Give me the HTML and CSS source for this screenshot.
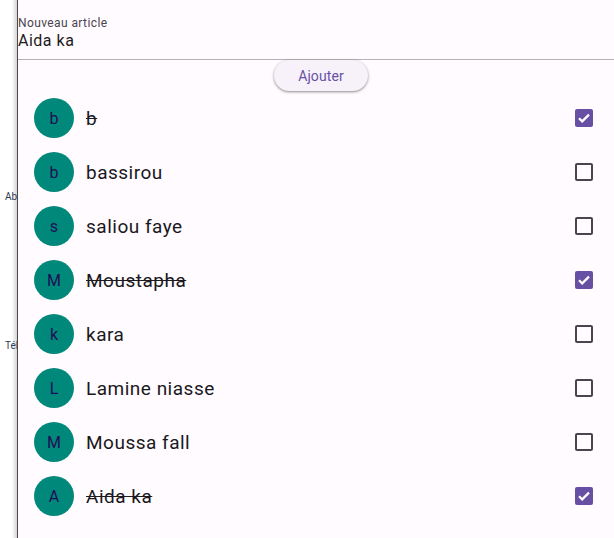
FILE: index.html
```html
<!DOCTYPE html>
<html lang="fr">
<head>
<meta charset="utf-8">
<link rel="stylesheet" href="styles.css">
</head>
<body>
<div class="prev">
  <span class="prev-label prev-ab">Ab</span>
  <span class="prev-label prev-te">Tél</span>
</div>
<main class="main">
  <div class="field">
    <div class="field-label">Nouveau article</div>
    <div class="field-input">Aida ka</div>
  </div>
  <div class="btn-row"><button class="btn">Ajouter</button></div>
  <ul class="list">
    <li class="row done"><span class="avatar">b</span><span class="title">b</span><span class="cb on"><svg viewBox="0 0 18 18"><path d="M4 9.3l3.2 3.1 6.8-6.8"/></svg></span></li>
    <li class="row"><span class="avatar">b</span><span class="title">bassirou</span><span class="cb"></span></li>
    <li class="row"><span class="avatar">s</span><span class="title">saliou faye</span><span class="cb"></span></li>
    <li class="row done"><span class="avatar">M</span><span class="title">Moustapha</span><span class="cb on"><svg viewBox="0 0 18 18"><path d="M4 9.3l3.2 3.1 6.8-6.8"/></svg></span></li>
    <li class="row"><span class="avatar">k</span><span class="title">kara</span><span class="cb"></span></li>
    <li class="row"><span class="avatar">L</span><span class="title">Lamine niasse</span><span class="cb"></span></li>
    <li class="row"><span class="avatar">M</span><span class="title">Moussa fall</span><span class="cb"></span></li>
    <li class="row done"><span class="avatar">A</span><span class="title">Aida ka</span><span class="cb on"><svg viewBox="0 0 18 18"><path d="M4 9.3l3.2 3.1 6.8-6.8"/></svg></span></li>
  </ul>
</main>
</body>
</html>
```

FILE: styles.css
```css
* { box-sizing: border-box; }
html, body { margin: 0; height: 100%; }
body {
  display: flex;
  font-family: Roboto, "Noto Sans", sans-serif;
  background: #fffbfe;
  overflow: hidden;
}
.prev {
  width: 18px;
  flex: none;
  position: relative;
  background: linear-gradient(to right, #ffffff 0, #ffffff 12px, #ececec 14px, #d6d6d6 17px);
  border-right: 1px solid #4a4a4a;
  overflow: hidden;
}
.prev-label {
  position: absolute;
  left: 5px;
  font-size: 10px;
  line-height: 12px;
  color: #2c3a55;
  white-space: nowrap;
}
.prev-ab { top: 191px; }
.prev-te { top: 340px; }
.main {
  flex: 1;
  background: #fffbfe;
  display: flex;
  flex-direction: column;
}
.field {
  padding-top: 15px;
  border-bottom: 1px solid #b4b1b7;
  height: 60px;
}
.field-label {
  font-size: 12px;
  line-height: 16px;
  color: #49454f;
  letter-spacing: 0.4px;
}
.field-input {
  font-size: 16px;
  line-height: 20px;
  color: #1d1b20;
  letter-spacing: 0.5px;
}
.btn-row {
  display: flex;
  justify-content: center;
  padding-left: 10px;
}
.btn {
  width: 94px;
  height: 31px;
  border: none;
  border-radius: 16px;
  background: #f7f2fa;
  color: #6750a4;
  font-family: Roboto, sans-serif;
  font-size: 14px;
  letter-spacing: 0.1px;
  box-shadow: 0 1px 2px rgba(0,0,0,0.3), 0 1px 3px 1px rgba(0,0,0,0.12);
  padding: 0;
}
.list {
  list-style: none;
  margin: 0;
  padding: 0;
}
.row {
  height: 54px;
  display: flex;
  align-items: center;
  padding-left: 16px;
  padding-right: 21px;
}
.avatar {
  width: 40px;
  height: 40px;
  border-radius: 50%;
  background: #00887a;
  color: #1f0f55;
  font-size: 16px;
  display: flex;
  align-items: center;
  justify-content: center;
  flex: none;
}
.title {
  flex: 1;
  margin-left: 12px;
  font-size: 19px;
  font-weight: 400;
  letter-spacing: 0.5px;
  color: #1a181d;
}
.done .title { text-decoration: line-through; text-decoration-color: #1d1b20; }
.cb {
  width: 18px;
  height: 18px;
  border: 2px solid #49454f;
  border-radius: 2px;
  flex: none;
}
.cb.on {
  border: none;
  background: #6750a4;
}
.cb svg { display: block; width: 18px; height: 18px; }
.cb path { fill: none; stroke: #fff; stroke-width: 2.2; }
```
